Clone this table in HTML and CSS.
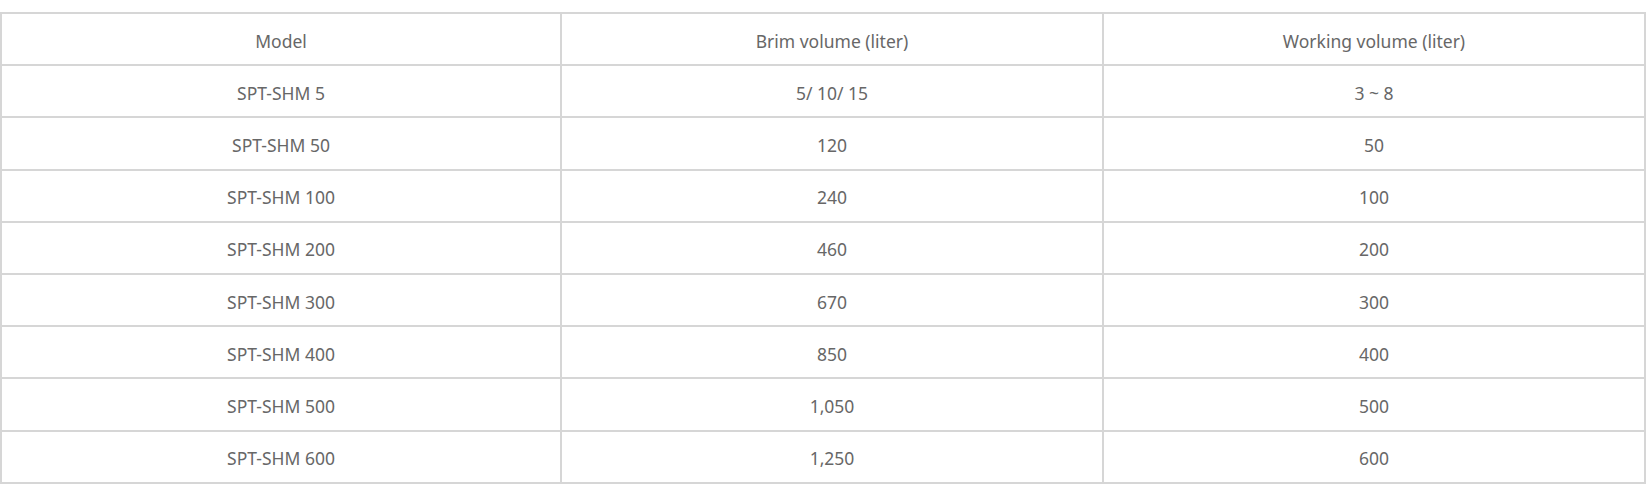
FILE: index.html
```html
<!DOCTYPE html>
<html>
<head>
<meta charset="utf-8">
<link rel="stylesheet" href="styles.css">
</head>
<body>
<div class="wrap">
<table class="spec">
  <colgroup><col class="c1"><col class="c2"><col class="c3"></colgroup>
  <tr><td>Model</td><td>Brim volume (liter)</td><td>Working volume (liter)</td></tr>
  <tr><td>SPT-SHM 5</td><td>5/ 10/ 15</td><td>3 ~ 8</td></tr>
  <tr><td>SPT-SHM 50</td><td>120</td><td>50</td></tr>
  <tr><td>SPT-SHM 100</td><td>240</td><td>100</td></tr>
  <tr><td>SPT-SHM 200</td><td>460</td><td>200</td></tr>
  <tr><td>SPT-SHM 300</td><td>670</td><td>300</td></tr>
  <tr><td>SPT-SHM 400</td><td>850</td><td>400</td></tr>
  <tr><td>SPT-SHM 500</td><td>1,050</td><td>500</td></tr>
  <tr><td>SPT-SHM 600</td><td>1,250</td><td>600</td></tr>
</table>
</div>
</body>
</html>
```
FILE: styles.css
```css
html, body {
  margin: 0;
  padding: 0;
  background: #fff;
}
.wrap {
  padding-top: 12px;
  width: 1646px;
}
.spec {
  width: 100%;
  border-collapse: collapse;
  table-layout: fixed;
  border: 2px solid #cfcfcf;
  font-family: "Noto Sans", "Open Sans", sans-serif;
  font-size: 17.5px;
  line-height: 22px;
  color: #676767;
}
.c1 { width: 560px; }
.c2 { width: 542px; }
.c3 { width: 542px; }
.spec td {
  border: 2px solid #d6d6d6;
  height: 47.2px;
  padding: 3px 0 0;
  text-align: center;
  vertical-align: middle;
}
```
